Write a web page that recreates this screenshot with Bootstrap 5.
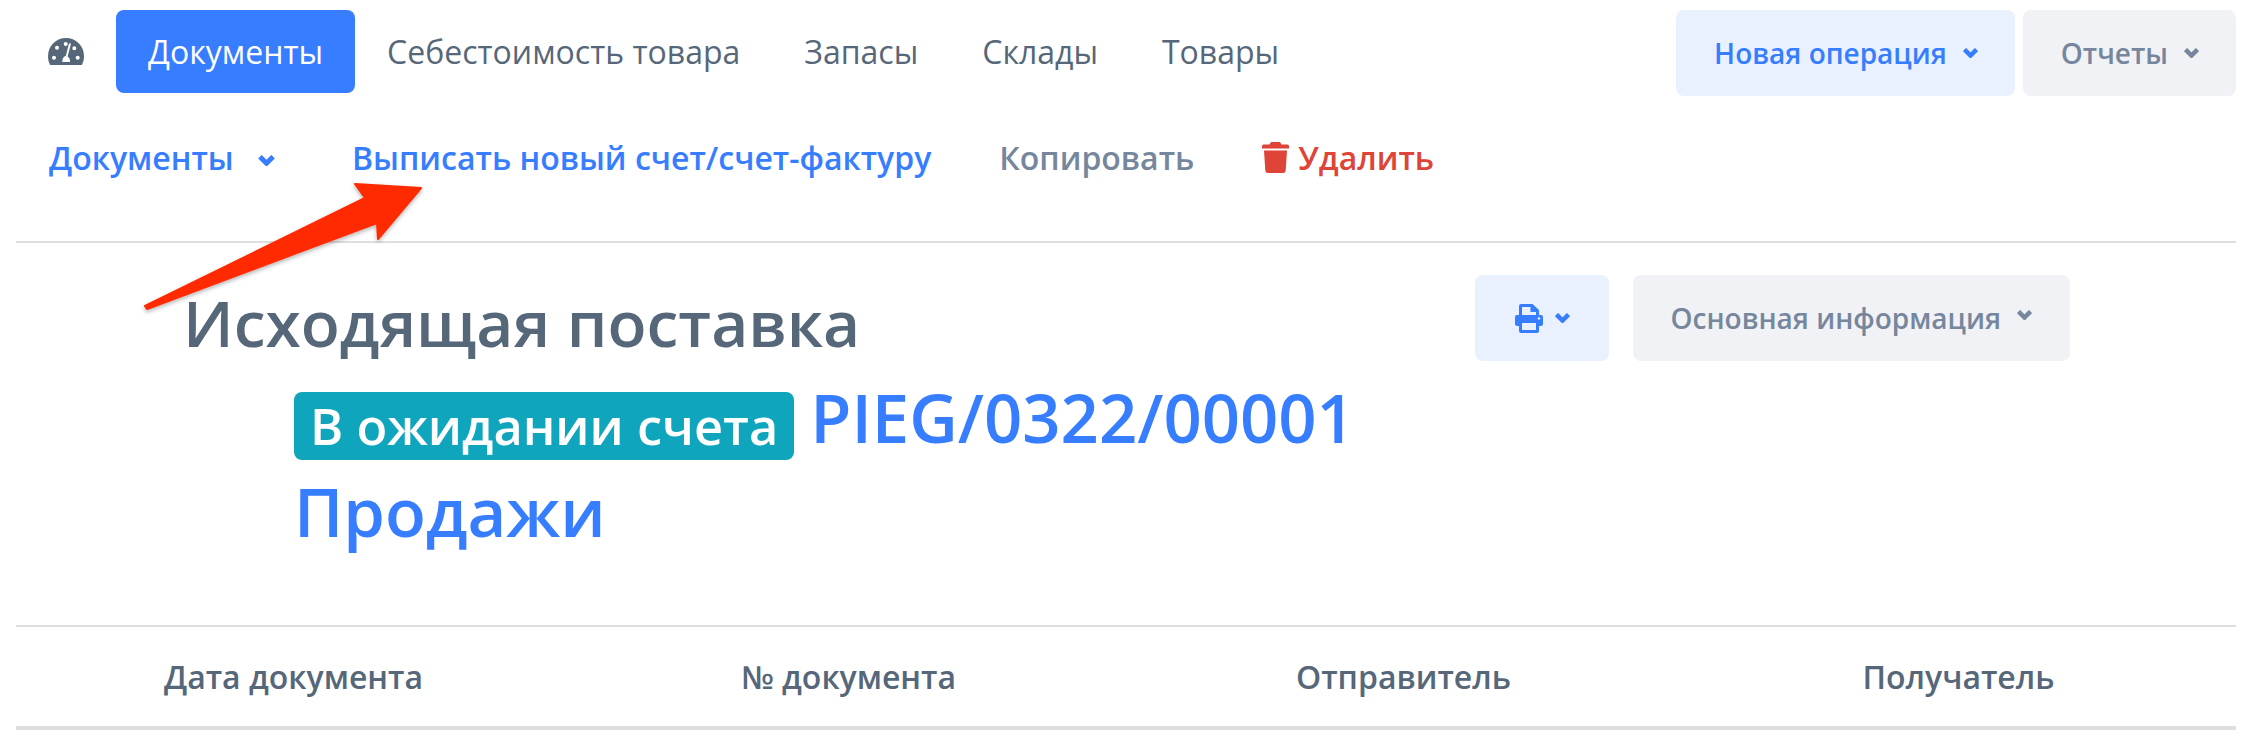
<!DOCTYPE html>
<html lang="ru">
<head>
    <meta charset="UTF-8">
    <meta name="viewport" content="width=device-width, initial-scale=1.0">
    <title>Исходящая поставка</title>

    <link rel="stylesheet" href="https://cdn.jsdelivr.net/npm/bootstrap@5.3.2/dist/css/bootstrap.min.css">
    <style>
        body { font-family: "Open Sans", "Noto Sans", sans-serif; color: #56677a; background: #fff; }
        .page-wrap { position: relative; padding: 10px 20px 0 16px; }

        .top-row { height: 86px; }
        .gauge-icon { width: 36px; height: 27px; margin: 0 32px 0 32px; fill: #56677a; }
        .main-nav .nav-link { font-size: 32px; line-height: 83px; height: 83px; padding: 0 32px; color: #56677a; border-radius: 8px; }
        .main-nav .nav-link.active { background: #377dff; color: #fff; }

        .soft-btn { font-size: 28px; font-weight: 600; height: 86px; border: 0; border-radius: 8px; display: inline-flex; align-items: center; }
        .soft-blue, .soft-blue:hover { background: #e9f1ff; color: #377dff; }
        .soft-gray, .soft-gray:hover { background: #f1f2f5; color: #76879d; }
        .top-row .soft-btn { padding: 0 37px 0 38px; gap: 16px; }
        .chev { width: 15px; height: 10px; fill: none; stroke: currentColor; stroke-width: 4.500; }

        .sub-nav { height: 147px; padding: 0 0 22px 33px; border-bottom: 2px solid #dedede; font-size: 32px; font-weight: 600; }
        .sub-nav a { text-decoration: none; }
        .text-blue { color: #377dff; }
        .text-slate { color: #76879d; }
        .text-red { color: #de4437; }
        .sub-docs { width: 303px; }
        .sub-docs .chev { width: 17px; height: 11px; margin-left: 24px; }
        .sub-new { margin-right: 68px; }
        .sub-copy { margin-right: 68px; }
        .trash-icon { width: 27px; height: 31px; margin-right: 9px; fill: #de4437; }

        .head-box { height: 382px; padding: 32px 166px 0 167px; }
        .doc-title { font-size: 64px; font-weight: 600; line-height: 88px; margin: 4px 0 0; color: #56677a; }
        .doc-sub { padding: 0 0 0 111px; margin-top: 3px; font-size: 67px; font-weight: 600; line-height: 94px; color: #377dff; }
        .doc-sub a { color: #377dff; text-decoration: none; }
        .status-tag { font-size: 50.500px; font-weight: 600; line-height: 68px; padding: 0 16px; border-radius: 8px; background: #0ea5bd; color: #fff; margin-right: 16px; vertical-align: -2px; }
        .head-actions { gap: 24px; }
        .print-btn { width: 134px; justify-content: center; gap: 12px; }
        .info-btn { padding: 0 38px 0 37px; gap: 16px; }
        .info-btn .chev { margin-top: -7px; }

        .doc-table { table-layout: fixed; margin: 0; }
        .doc-table th { font-size: 32px; font-weight: 600; color: #56677a; text-align: center; height: 102px; vertical-align: middle; padding: 0; border-top: 2px solid #dedede; border-bottom: 4px solid #dedede; }
        .arrow-over { position: absolute; left: 0; top: 0; width: 440px; height: 320px; pointer-events: none; overflow: visible; }
    </style>
</head>
<body>
    <svg width="0" height="0" class="d-block">
        <symbol id="chev" viewBox="0 0 15 10"><path d="M1.500 1.500 7.500 7.500 13.500 1.500"/></symbol>
    </svg>

    <div class="page-wrap">
        <!-- top menu -->
        <div class="top-row d-flex justify-content-between align-items-start">
            <div class="d-flex align-items-center">
                <svg class="gauge-icon" viewBox="0 0 36 27">
                    <path fill-rule="evenodd" d="M18 0A18 18 0 0 1 36 18C36 21.500 35.200 24.500 33.800 27H2.200C.8 24.500 0 21.500 0 18A18 18 0 0 1 18 0ZM6 17.700a2 2 0 1 0 0 4 2 2 0 0 0 0-4ZM9 7.700a2 2 0 1 0 0 4 2 2 0 0 0 0-4ZM17.700 4a2 2 0 1 0 0 4 2 2 0 0 0 0-4ZM26.300 8.300a2 2 0 1 0 0 4 2 2 0 0 0 0-4ZM29.700 17.700a2 2 0 1 0 0 4 2 2 0 0 0 0-4ZM23 5.500 19.600 18.500C21.400 19.500 22.300 21.500 22 24H14.300C14 20.500 15.800 18.300 17.800 18L21 5.500Z"/>
                </svg>
                <ul class="nav nav-pills main-nav">
                    <li class="nav-item"><a class="nav-link active" href="#">Документы</a></li>
                    <li class="nav-item"><a class="nav-link" href="#">Себестоимость товара</a></li>
                    <li class="nav-item"><a class="nav-link" href="#">Запасы</a></li>
                    <li class="nav-item"><a class="nav-link" href="#">Склады</a></li>
                    <li class="nav-item"><a class="nav-link" href="#">Товары</a></li>
                </ul>
            </div>
            <div class="d-flex gap-2">
                <button class="btn soft-btn soft-blue">Новая операция <svg class="chev"><use href="#chev"/></svg></button>
                <button class="btn soft-btn soft-gray">Отчеты <svg class="chev"><use href="#chev"/></svg></button>
            </div>
        </div>

        <!-- document actions -->
        <div class="sub-nav d-flex align-items-center">
            <a class="sub-docs text-blue" href="#">Документы<svg class="chev"><use href="#chev"/></svg></a>
            <a class="sub-new text-blue" href="#">Выписать новый счет/счет-фактуру</a>
            <a class="sub-copy text-slate" href="#">Копировать</a>
            <a class="text-red d-flex align-items-center" href="#">
                <svg class="trash-icon" viewBox="0 0 27 31">
                    <path d="M9 0H18L19.500 2.500H25.500Q27 2.500 27 4V6.500H0V4Q0 2.500 1.500 2.500H7.500ZM2 8.500H25L23.700 28.500Q23.500 31 21 31H6Q3.500 31 3.300 28.500Z"/>
                </svg>Удалить
            </a>
        </div>

        <!-- document head -->
        <div class="head-box">
            <div class="d-flex justify-content-between align-items-start">
                <h1 class="doc-title">Исходящая поставка</h1>
                <div class="head-actions d-flex">
                    <button class="btn soft-btn soft-blue print-btn">
                        <svg width="28" height="29" viewBox="0 0 28 29" fill="#377dff">
                            <path fill-rule="evenodd" d="M6 0H17.500L24 6V11H26Q28 11 28 13V20Q28 22 26 22H24V27Q24 29 22 29H6Q4 29 4 27V22H2Q0 22 0 20V13Q0 11 2 11H4V2Q4 0 6 0ZM7 3V11H21V8H15.500V3ZM7 19V26H21V19Z"/>
                            <circle cx="24" cy="14.500" r="1.300" fill="#e9f1ff"/>
                        </svg>
                        <svg class="chev"><use href="#chev"/></svg>
                    </button>
                    <button class="btn soft-btn soft-gray info-btn">Основная информация <svg class="chev"><use href="#chev"/></svg></button>
                </div>
            </div>
            <div class="doc-sub">
                <span class="badge status-tag">В ожидании счета</span><a href="#">PIEG/0322/00001</a><br>
                <a href="#">Продажи</a>
            </div>
        </div>

        <!-- lines table -->
        <table class="table doc-table">
            <thead>
                <tr>
                    <th>Дата документа</th>
                    <th>№ документа</th>
                    <th>Отправитель</th>
                    <th>Получатель</th>
                </tr>
            </thead>
        </table>

        <!-- arrow annotation drawn over the page -->
        <svg class="arrow-over" viewBox="0 0 440 320">
            <defs>
                <filter id="arrowShade" x="-10%" y="-10%" width="120%" height="130%">
                    <feDropShadow dx="0" dy="2" stdDeviation="2" flood-color="#000" flood-opacity=".3"/>
                </filter>
            </defs>
            <path fill="#ff2a00" filter="url(#arrowShade)" stroke="#ff2a00" stroke-linejoin="round" stroke-width="2" d="M421 188 355 184 365 198 145 306 147 309 377 223 378 239Z"/>
        </svg>
    </div>

    <script src="https://cdn.jsdelivr.net/npm/bootstrap@5.3.2/dist/js/bootstrap.bundle.min.js"></script>
</body>
</html>
